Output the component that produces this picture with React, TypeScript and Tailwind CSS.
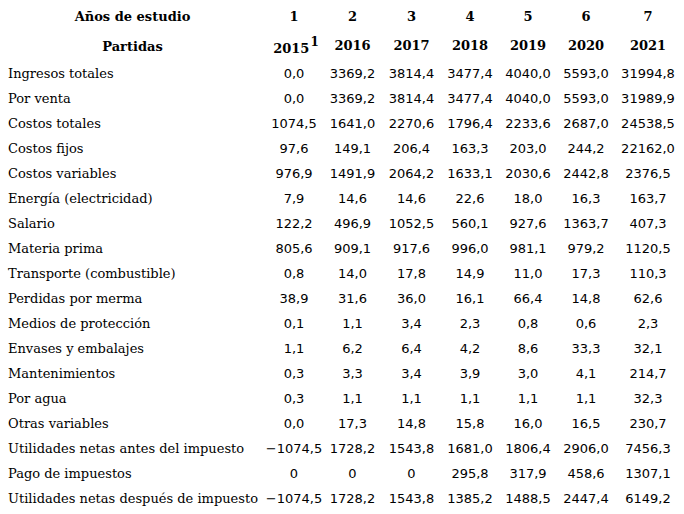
import React from 'react';

const rows: [string, string[]][] = [
  ['Ingresos totales', ['0,0', '3369,2', '3814,4', '3477,4', '4040,0', '5593,0', '31994,8']],
  ['Por venta', ['0,0', '3369,2', '3814,4', '3477,4', '4040,0', '5593,0', '31989,9']],
  ['Costos totales', ['1074,5', '1641,0', '2270,6', '1796,4', '2233,6', '2687,0', '24538,5']],
  ['Costos fijos', ['97,6', '149,1', '206,4', '163,3', '203,0', '244,2', '22162,0']],
  ['Costos variables', ['976,9', '1491,9', '2064,2', '1633,1', '2030,6', '2442,8', '2376,5']],
  ['Energía (electricidad)', ['7,9', '14,6', '14,6', '22,6', '18,0', '16,3', '163,7']],
  ['Salario', ['122,2', '496,9', '1052,5', '560,1', '927,6', '1363,7', '407,3']],
  ['Materia prima', ['805,6', '909,1', '917,6', '996,0', '981,1', '979,2', '1120,5']],
  ['Transporte (combustible)', ['0,8', '14,0', '17,8', '14,9', '11,0', '17,3', '110,3']],
  ['Perdidas por merma', ['38,9', '31,6', '36,0', '16,1', '66,4', '14,8', '62,6']],
  ['Medios de protección', ['0,1', '1,1', '3,4', '2,3', '0,8', '0,6', '2,3']],
  ['Envases y embalajes', ['1,1', '6,2', '6,4', '4,2', '8,6', '33,3', '32,1']],
  ['Mantenimientos', ['0,3', '3,3', '3,4', '3,9', '3,0', '4,1', '214,7']],
  ['Por agua', ['0,3', '1,1', '1,1', '1,1', '1,1', '1,1', '32,3']],
  ['Otras variables', ['0,0', '17,3', '14,8', '15,8', '16,0', '16,5', '230,7']],
  ['Utilidades netas antes del impuesto', ['−1074,5', '1728,2', '1543,8', '1681,0', '1806,4', '2906,0', '7456,3']],
  ['Pago de impuestos', ['0', '0', '0', '295,8', '317,9', '458,6', '1307,1']],
  ['Utilidades netas después de impuesto', ['−1074,5', '1728,2', '1543,8', '1385,2', '1488,5', '2447,4', '6149,2']],
];

const grid = 'grid grid-cols-[265px_58px_59px_59px_58px_58px_58px_66px]';
const serif = "font-['DejaVu_Serif',serif]";
const sans = "font-['DejaVu_Sans',sans-serif]";

export default function App() {
  return (
    <div className="w-[684px] h-[514px] bg-white text-black pt-[3px] overflow-hidden">
      {/* Header: study years */}
      <div className={`${grid} h-[28px] items-center ${serif} font-bold text-[13px]`}>
        <div className="text-center">Años de estudio</div>
        {['1', '2', '3', '4', '5', '6', '7'].map((n) => (
          <div key={n} className="text-center">{n}</div>
        ))}
      </div>

      {/* Header: years */}
      <div className={`${grid} h-[30px] items-center ${serif} font-bold text-[13px]`}>
        <div className="text-center pt-[1px]">Partidas</div>
        <div className="text-center pt-[4px] pl-[4px] leading-none">
          2015<span className="inline-block text-[12px] leading-none relative -top-[7px] ml-[1px]">1</span>
        </div>
        {['2016', '2017', '2018', '2019', '2020', '2021'].map((y) => (
          <div key={y} className="text-center">{y}</div>
        ))}
      </div>

      {/* Data rows */}
      {rows.map(([label, vals]) => (
        <div key={label} className={`${grid} h-[25px] items-center text-[13px]`}>
          <div className={`${serif} pl-[8px] whitespace-nowrap`}>{label}</div>
          {vals.map((v, i) => (
            <div key={i} className={`${sans} text-center whitespace-nowrap`}>{v}</div>
          ))}
        </div>
      ))}
    </div>
  );
}
